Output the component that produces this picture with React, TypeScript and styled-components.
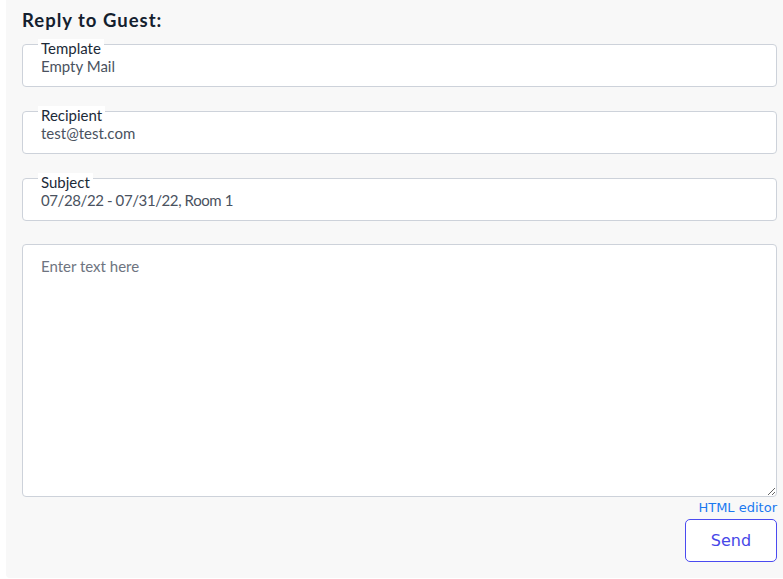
import React from "react";
import styled, { createGlobalStyle } from "styled-components";

const GlobalStyle = createGlobalStyle`
  html, body { margin: 0; padding: 0; background: #ffffff; }
  body { font-family: "Lato", "Open Sans", sans-serif; }
  * { box-sizing: border-box; }
`;

const Page = styled.div`
  padding-left: 6px;
`;

const Panel = styled.div`
  background: #f8f8f8;
  border-bottom-left-radius: 4px;
  padding: 8px 6px 16px 16px;
  display: flex;
  flex-direction: column;
  min-height: 578px;
`;

const Heading = styled.h2`
  margin: 0;
  font-family: "Lato", sans-serif;
  font-weight: 700;
  font-size: 18.5px;
  line-height: 24px;
  color: #14202e;
  letter-spacing: 1px;
`;

const Fields = styled.div`
  display: flex;
  flex-direction: column;
  gap: 24px;
  margin-top: 12px;
`;

const Box = styled.div`
  position: relative;
  background: #ffffff;
  border: 1px solid #cdd2da;
  border-radius: 4px;
  padding: 12px 18px 11px 18px;
`;

const Label = styled.span`
  position: absolute;
  top: -6px;
  left: 15px;
  padding: 0 3px;
  background: #ffffff;
  font-size: 15px;
  line-height: 18px;
  color: #1c2a38;
`;

const Value = styled.div<{ $tight?: boolean }>`
  font-size: 15px;
  line-height: 18px;
  color: #4a5260;
  letter-spacing: ${(p) => (p.$tight ? "-0.4px" : "0")};
`;

const Editor = styled.textarea`
  display: block;
  width: 100%;
  height: 253px;
  margin: -1px 0 0 0;
  border: 1px solid #cdd2da;
  border-radius: 4px;
  background: #ffffff;
  padding: 12px 18px;
  font-family: "Lato", sans-serif;
  font-size: 15px;
  line-height: 18px;
  color: #4a5260;
  resize: vertical;
  outline: none;
  &::placeholder { color: #6e7480; }
`;

const Footer = styled.div`
  display: flex;
  flex-direction: column;
  align-items: flex-end;
`;

const EditorLink = styled.a`
  font-family: "DejaVu Sans", sans-serif;
  font-size: 13px;
  line-height: 20px;
  color: #1a78f0;
  text-decoration: none;
  margin-top: 1px;
  cursor: pointer;
`;

const SendButton = styled.button`
  width: 92px;
  height: 43px;
  margin-top: 1px;
  border: 1px solid #4b4bf0;
  border-radius: 5px;
  background: #ffffff;
  color: #4747e8;
  font-family: "DejaVu Sans", sans-serif;
  font-size: 16px;
  cursor: pointer;
`;

const fields = [
  { label: "Template", value: "Empty Mail" },
  { label: "Recipient", value: "test@test.com" },
  { label: "Subject", value: "07/28/22 - 07/31/22, Room 1", tight: true },
];

export default function App() {
  return (
    <Page>
      <GlobalStyle />
      <Panel>
        <Heading>Reply to Guest:</Heading>
        <Fields>
          {fields.map((f) => (
            <Box key={f.label}>
              <Label>{f.label}</Label>
              <Value $tight={f.tight}>{f.value}</Value>
            </Box>
          ))}
          <Editor placeholder="Enter text here" />
        </Fields>
        <Footer>
          <EditorLink>HTML editor</EditorLink>
          <SendButton>Send</SendButton>
        </Footer>
      </Panel>
    </Page>
  );
}
